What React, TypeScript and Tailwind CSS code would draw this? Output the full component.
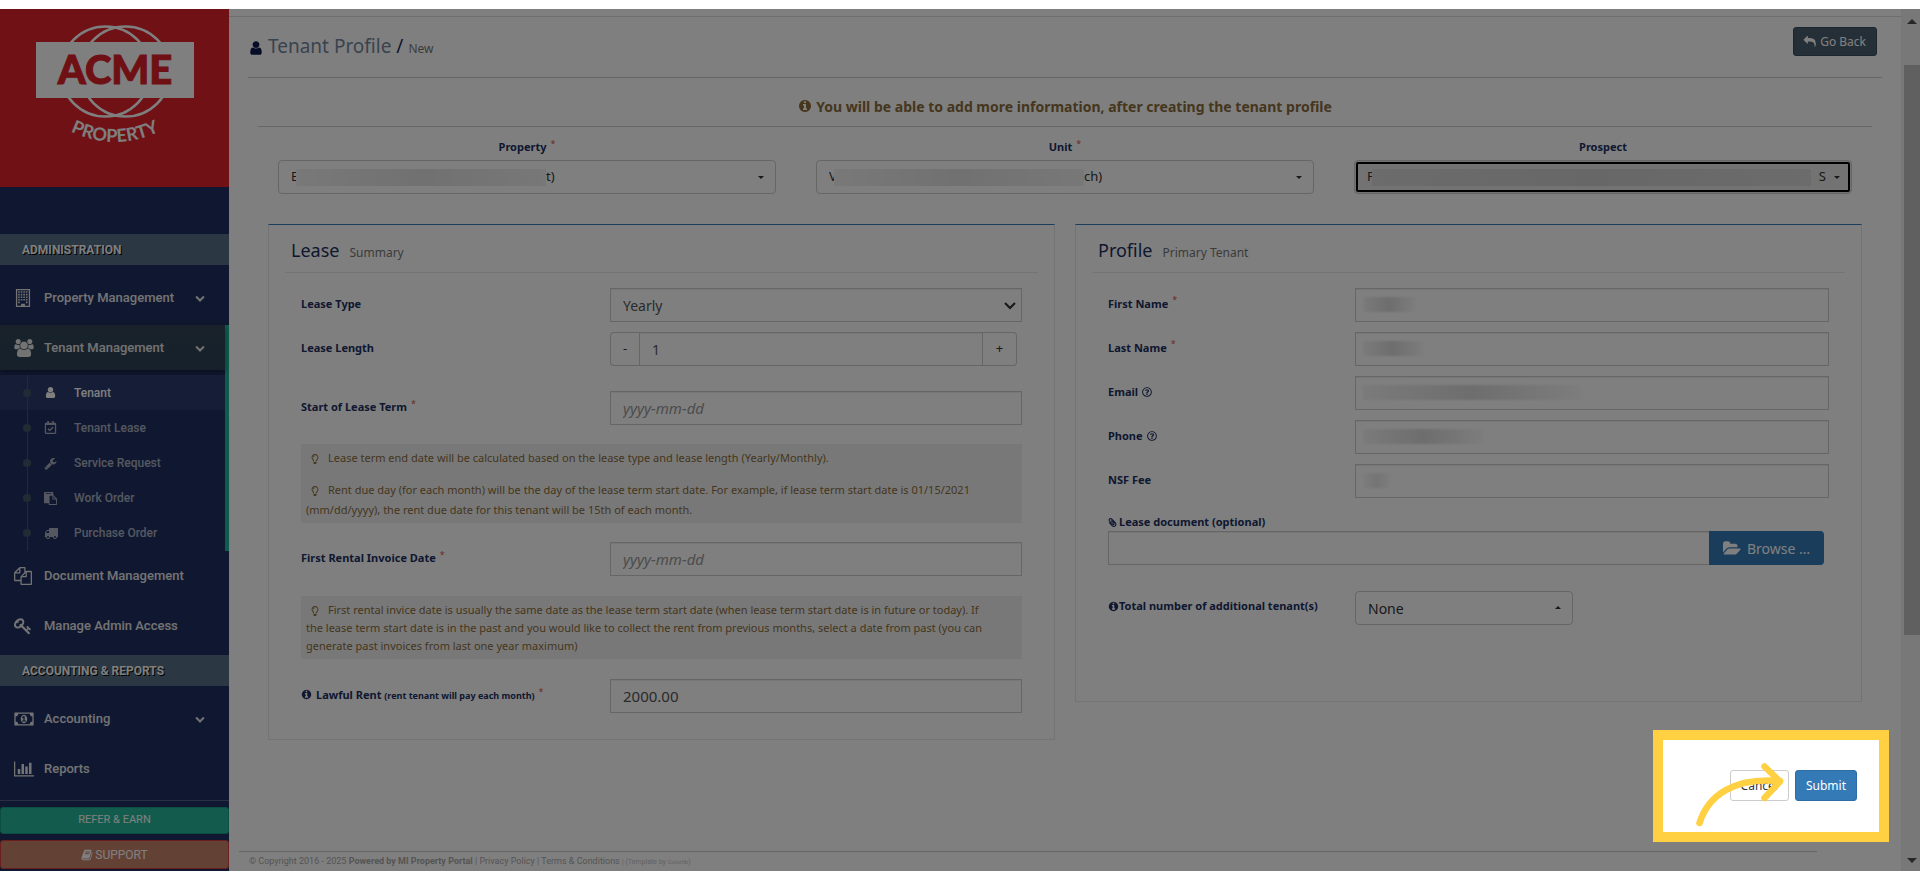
import type { ReactNode } from 'react';
import { FaPaperclip, FaRegCalendarCheck, FaRegLightbulb, FaRegQuestionCircle } from 'react-icons/fa';

const icons = {
  user: {
    w: 1792,
    d: 'M1536 1399q0 109-62.5 187t-150.500 78h-854q-88 0-150.500-78t-62.500-187q0-85 8.500-160.500t31.500-152 58.500-131 94-89 134.500-34.500q131 128 313 128t313-128q76 0 134.500 34.500t94 89 58.500 131 31.500 152 8.500 160.500zm-256-887q0 159-112.500 271.500t-271.500 112.500-271.500-112.500-112.500-271.500 112.500-271.500 271.500-112.500 271.500 112.500 112.500 271.500z',
  },
  building: {
    w: 1792,
    d: 'M192 0h1408v1792h-1408zM320 128v1536h384v-192h384v192h384v-1536zM416 224h160v160h-160zM672 224h160v160h-160zM928 224h160v160h-160zM1184 224h160v160h-160zM416 480h160v160h-160zM672 480h160v160h-160zM928 480h160v160h-160zM1184 480h160v160h-160zM416 736h160v160h-160zM672 736h160v160h-160zM928 736h160v160h-160zM1184 736h160v160h-160zM416 992h160v160h-160zM672 992h160v160h-160zM928 992h160v160h-160zM1184 992h160v160h-160zM416 1248h160v160h-160zM1184 1248h160v160h-160z',
  },
  info: {
    w: 1792,
    d: 'M1152 1376v-160q0-14-9-23t-23-9h-96v-512q0-14-9-23t-23-9h-320q-14 0-23 9t-9 23v160q0 14 9 23t23 9h96v320h-96q-14 0-23 9t-9 23v160q0 14 9 23t23 9h448q14 0 23-9t9-23zm-128-896v-160q0-14-9-23t-23-9h-192q-14 0-23 9t-9 23v160q0 14 9 23t23 9h192q14 0 23-9t9-23zm640 416q0 209-103 385.500t-279.500 279.500-385.500 103-385.500-103-279.500-279.500-103-385.500 103-385.500 279.500-279.500 385.500-103 385.500 103 279.500 279.500 103 385.500z',
  },
  chevron: {
    w: 1792,
    d: 'M1683 808l-742 741q-19 19-45 19t-45-19l-742-741q-19-19-19-45.500t19-45.500l166-165q19-19 45-19t45 19l531 531 531-531q19-19 45-19t45 19l166 165q19 19 19 45.500t-19 45.500z',
  },
  chart: {
    w: 2048,
    d: 'M640 896v512h-256v-512h256zm384-512v1024h-256v-1024h256zm1024 1152v128h-2048v-1536h128v1408h1920zm-640-896v768h-256v-768h256zm384-384v1152h-256v-1152h256z',
  },
  money: {
    w: 1920,
    d: 'M768 1152h384v-96h-128v-448h-114l-148 137 77 80q42-37 55-57h2v288h-128v96zm512-256q0 70-21 142t-59.500 134-101.500 101-138 39-138-39-101.500-101-59.500-134-21-142 21-142 59.500-134 101.500-101 138-39 138 39 101.500 101 59.500 134 21 142zm512 256v-512q-106 0-181-75t-75-181h-1152q0 106-75 181t-181 75v512q106 0 181 75t75 181h1152q0-106 75-181t181-75zm128-832v1152q0 26-19 45t-45 19h-1792q-26 0-45-19t-19-45v-1152q0-26 19-45t45-19h1792q26 0 45 19t19 45z',
  },
  group: {
    w: 1920,
    d: 'M593 896q-162 5-265 128h-134q-82 0-138-40.500t-56-118.500q0-353 124-353 6 0 43.500 21t97.500 42.500 119 21.500q67 0 133-23-5 37-5 66 0 139 81 256zm1071 637q0 120-73 189.500t-194 69.500h-874q-121 0-194-69.500t-73-189.500q0-53 3.500-103.500t14-109 26.500-108.500 43-97.500 62-81 85.500-53.500 111.500-20q10 0 43 21.500t73 48 107 48 135 21.500 135-21.500 107-48 73-48 43-21.500q61 0 111.500 20t85.500 53.500 62 81 43 97.500 26.500 108.500 14 109 3.500 103.500zm-1024-1277q0 106-75 181t-181 75-181-75-75-181 75-181 181-75 181 75 75 181zm704 384q0 159-112.500 271.500t-271.500 112.500-271.500-112.500-112.500-271.500 112.500-271.500 271.500-112.500 271.500 112.500 112.500 271.500zm576 225q0 78-56 118.500t-138 40.500h-134q-103-123-265-128 81-117 81-256 0-29-5-66 66 23 133 23 59 0 119-21.500t97.500-42.500 43.500-21q124 0 124 353zm-128-609q0 106-75 181t-181 75-181-75-75-181 75-181 181-75 181 75 75 181z',
  },
  wrench: {
    w: 1792,
    d: 'M448 1472q0-26-19-45t-45-19-45 19-19 45 19 45 45 19 45-19 19-45zm644-420l-682 682q-37 37-90 37-52 0-91-37l-106-108q-38-36-38-90 0-53 38-91l681-681q39 98 114.500 173.500t173.500 114.500zm634-435q0 39-23 106-47 134-164.500 217.500t-258.500 83.500q-185 0-316.500-131.500t-131.500-316.500 131.500-316.500 316.500-131.500q58 0 121.500 16.500t107.500 46.500q16 11 16 28t-16 28l-293 169v224l193 107q5-3 79-48.500t135.500-81 70.500-35.500q15 0 23.500 10t8.500 25z',
  },
  truck: {
    w: 1792,
    d: 'M640 1408q0-52-38-90t-90-38-90 38-38 90 38 90 90 38 90-38 38-90zm-384-512h384v-256h-158q-13 0-22 9l-195 195q-9 9-9 22v30zm1280 512q0-52-38-90t-90-38-90 38-38 90 38 90 90 38 90-38 38-90zm256-1088v1024q0 15-4 26.500t-13.500 18.500-16.500 11.500-23.500 6-22.500 2-25.500 0-22.500-.5q0 106-75 181t-181 75-181-75-75-181h-384q0 106-75 181t-181 75-181-75-75-181h-64q-3 0-22.500.5t-25.500 0-22.500-2-23.500-6-16.500-11.500-13.500-18.500-4-26.500q0-26 19-45t45-19v-320q0-8-.5-35t0-38 2.500-34.500 6.500-37 14-30.500 22.500-30l198-198q19-19 50.500-32t58.500-13h160v-192q0-26 19-45t45-19h1024q26 0 45 19t19 45z',
  },
  key: {
    w: 1792,
    d: 'M832 512q0-80-56-136t-136-56-136 56-56 136q0 42 19 83-41-19-83-19-80 0-136 56t-56 136 56 136 136 56 136-56 56-136q0-42-19-83 41 19 83 19 80 0 136-56t56-136zm851 704q0 17-49 66t-66 49q-9 0-28.500-16t-36.500-33-38.500-40-24.500-26l-96 96 220 220q28 28 28 68 0 42-39 81t-81 39q-40 0-68-28l-671-671q-176 131-365 131-163 0-265.500-102.500t-102.500-265.500q0-160 95-313t248-248 313-95q163 0 265.500 102.500t102.500 265.500q0 189-131 365l355 355 96-96q-3-3-26-24.500t-40-38.500-33-36.500-16-28.500q0-17 49-66t66-49q13 0 23 10 6 6 46 44.500t82 79.500 86.500 86 73 78 28.500 41z',
  },
  files: {
    w: 1792,
    d: 'M1696 384q40 0 68 28t28 68v1216q0 40-28 68t-68 28h-960q-40 0-68-28t-28-68v-288h-544q-40 0-68-28t-28-68v-672q0-40 20-88t48-76l408-408q28-28 76-48t88-20h416q40 0 68 28t28 68v328q68-40 128-40h416zm-544 213l-299 299h299v-299zm-640-384l-299 299h299v-299zm196 647l316-316v-416h-384v416q0 40-28 68t-68 28h-416v640h512v-256q0-40 20-88t48-76zm956 804v-1152h-384v416q0 40-28 68t-68 28h-416v640h896z',
  },
  paste: {
    w: 1792,
    d: 'M768 1664h896v-640h-416q-40 0-68-28t-28-68v-416h-384v1152zm256-1440v-64q0-13-9.500-22.500t-22.500-9.500h-704q-13 0-22.500 9.500t-9.500 22.500v64q0 13 9.500 22.500t22.500 9.500h704q13 0 22.500-9.500t9.500-22.500zm256 672h299l-299-299v299zm512 128v672q0 40-28 68t-68 28h-960q-40 0-68-28t-28-68v-160h-544q-40 0-68-28t-28-68v-1344q0-40 28-68t68-28h1088q40 0 68 28t28 68v328q21 13 36 28l408 408q28 28 48 76t20 88z',
  },
  reply: {
    w: 1792,
    d: 'M1792 1120q0 166-127 451-3 7-10.500 24t-13.500 30-13 22q-12 17-28 17-15 0-23.500-10t-8.500-25q0-9 2.500-26.500t2.500-23.500q5-68 5-123 0-112-19.500-200.500t-54-153.500-89-112-117-78-147.500-50.500-168.500-28.500-185-8h-224v256q0 26-19 45t-45 19-45-19l-512-512q-19-19-19-45t19-45l512-512q19-19 45-19t45 19 19 45v256h224q713 0 875 403 53 134 53 333z',
  },
  folder: {
    w: 1920,
    d: 'M1879 952q0 31-31 66l-336 396q-43 51-120.500 86.500t-143.500 35.500h-1088q-34 0-60.500-13t-26.500-43q0-31 31-66l336-396q43-51 120.500-86.500t143.500-35.500h1088q34 0 60.500 13t26.500 43zm-343-344v160h-832q-94 0-197 47.500t-164 119.500l-337 396-5 6q0-4-.5-12.500t-.5-12.500v-960q0-92 66-158t158-66h320q92 0 158 66t66 158v32h544q92 0 158 66t66 158z',
  },
  book: {
    w: 1792,
    d: 'M1703 478q40 57 18 129l-275 906q-19 64-76.500 107.500t-122.500 43.500h-923q-77 0-148.500-53.500t-99.500-131.500q-24-67-2-127 0-4 3-27t4-37q1-8-3-21.500t-3-19.500q2-11 8-21t16.500-23.500 16.500-23.500q23-38 45-91.500t30-91.500q3-10 .5-30t-.5-28q3-11 17-28t17-23q21-36 42-92t25-90q1-9-2.500-32t.5-28q4-13 22-30.500t22-22.500q19-26 42.500-84.500t27.500-96.500q1-8-3-25.500t-2-26.500q2-8 9-18t18-23 17-21q8-12 16.500-30.500t15-35 16-36 19.500-32 26.500-23.500 36-11.500 47.500 5.500l-1 3q38-9 51-9h761q74 0 114 56t18 130l-274 906q-36 119-71.500 153.500t-128.500 34.500h-869q-27 0-38 15-11 16-1 43 24 70 144 70h923q29 0 56-15.500t35-41.500l300-987q7-22 5-57 38 15 59 43zm-1064 2q-4 13 2 22.500t20 9.500h608q13 0 25.500-9.500t16.500-22.500l21-64q4-13-2-22.500t-20-9.500h-608q-13 0-25.500 9.500t-16.500 22.500zm-83 256q-4 13 2 22.500t20 9.500h608q13 0 25.500-9.500t16.500-22.500l21-64q4-13-2-22.500t-20-9.500h-608q-13 0-25.500 9.500t-16.500 22.500z',
  },
};

function Icon({ name, className }: { name: keyof typeof icons; className: string }) {
  const icon = icons[name];
  return (
    <svg
      viewBox={`0 0 ${icon.w} 1792`}
      className={`shrink-0 overflow-visible ${className}`}
      fill="currentColor"
      fillRule={name === 'building' ? 'evenodd' : 'nonzero'}
      aria-hidden="true"
    >
      <path d={icon.d} />
    </svg>
  );
}

function Caret({ up = false, className = '' }: { up?: boolean; className?: string }) {
  return (
    <svg viewBox="0 0 6 3" className={`pointer-events-none h-[3px] w-1.5 fill-[#333] ${up ? 'rotate-180' : ''} ${className}`} aria-hidden="true">
      <path d="M0 0h6L3 3z" />
    </svg>
  );
}

function Logo() {
  return (
    <svg viewBox="0 0 160 124" className="h-[124px] w-40" role="img" aria-label="ACME Property">
      <g fill="none" stroke="#fff" strokeWidth="2.600">
        <circle cx="70.500" cy="47.500" r="45" />
        <circle cx="90.500" cy="47.500" r="45" />
      </g>
      <rect x="1" y="18" width="158" height="56" fill="#fff" />
      <text
        x="80"
        y="60"
        textAnchor="middle"
        fill="#de2129"
        stroke="#de2129"
        strokeWidth="1"
        className="font-['Lato',sans-serif] text-[40px] font-black"
      >
        ACME
      </text>
      <path id="logo-arc" d="M22 100 Q80 136 138 100" fill="none" />
      <text fill="#fff" className="font-['Lato',sans-serif] text-[18px] font-bold">
        <textPath href="#logo-arc" startOffset="50%" textAnchor="middle">
          PROPERTY
        </textPath>
      </text>
    </svg>
  );
}

function MenuHeading({ children }: { children: ReactNode }) {
  return (
    <h3 className="flex h-[31px] items-center bg-[#577086] px-[22px] text-[12px] font-bold text-white uppercase [text-shadow:1px_1px_#000]">
      {children}
    </h3>
  );
}

function MenuItem({ icon, label, expandable = false, active = false }: { icon: ReactNode; label: string; expandable?: boolean; active?: boolean }) {
  return (
    <a
      href="#"
      className={`flex items-center pl-[14px] text-[13px] font-medium text-[#e7e7e7] ${
        active ? 'h-[45px] bg-linear-to-b from-[#334556] to-[#2c4257] pr-5 shadow-[0_2px_6px_rgba(0,0,0,0.4)]' : 'h-[50px] pr-6'
      }`}
    >
      <span className="flex w-[30px] shrink-0">{icon}</span>
      <span className="flex-1">{label}</span>
      {expandable && <Icon name="chevron" className="size-[10px]" />}
    </a>
  );
}

const tenantLinks = [
  { label: 'Tenant', icon: <Icon name="user" className="size-[13px]" /> },
  { label: 'Tenant Lease', icon: <FaRegCalendarCheck className="size-[13px]" /> },
  { label: 'Service Request', icon: <Icon name="wrench" className="size-[13px]" /> },
  { label: 'Work Order', icon: <Icon name="paste" className="size-[13px]" /> },
  { label: 'Purchase Order', icon: <Icon name="truck" className="size-[14px]" /> },
];

function Sidebar() {
  return (
    <aside className="flex w-[229px] shrink-0 flex-col bg-[#203062] font-['Roboto',sans-serif]">
      <div className="flex h-[178px] justify-center bg-[#de222b] pt-[15px]">
        <Logo />
      </div>
      <nav className="pt-[47px]">
        <MenuHeading>Administration</MenuHeading>
        <div className="pt-2 pb-0.5">
          <MenuItem icon={<Icon name="building" className="size-[18px]" />} label="Property Management" expandable />
        </div>
        <div className="border-r-4 border-[#1abb9c]">
          <MenuItem icon={<Icon name="group" className="h-[18px] w-5" />} label="Tenant Management" expandable active />
          <ul className="relative mt-[5px] flex h-44 flex-col">
            {tenantLinks.map((link, i) => (
              <li
                key={link.label}
                className={`relative flex flex-1 items-center before:absolute before:inset-y-0 before:left-[27px] before:w-px before:bg-[#425668] ${
                  i === 0 ? 'bg-[#2b3b6e]' : ''
                }`}
              >
                <span className="absolute left-[23px] size-2 rounded-full bg-[#425668]" />
                <a href="#" className={`flex items-center pl-11 text-[12px] font-medium ${i === 0 ? 'text-white' : 'text-[#aab0c0]'}`}>
                  <span className="flex w-[30px]">{link.icon}</span>
                  {link.label}
                </a>
              </li>
            ))}
          </ul>
        </div>
        <div className="pb-1">
          <MenuItem icon={<Icon name="files" className="size-[18px]" />} label="Document Management" />
          <MenuItem icon={<Icon name="key" className="size-[18px]" />} label="Manage Admin Access" />
        </div>
        <MenuHeading>Accounting &amp; Reports</MenuHeading>
        <div className="pt-2 pb-1.5">
          <MenuItem icon={<Icon name="money" className="h-[18px] w-5" />} label="Accounting" expandable />
          <MenuItem icon={<Icon name="chart" className="h-[18px] w-5" />} label="Reports" />
        </div>
      </nav>
      <div className="flex flex-col gap-1.5 border-t border-[#53618c] pt-1.5">
        <a href="#" className="flex h-[27px] items-center justify-center rounded-[3px] border border-[#169f85] bg-[#26b99a] text-[11px] text-white">
          REFER &amp; EARN
        </a>
        <a href="#" className="flex h-[29px] items-center justify-center gap-0.5 rounded-[3px] border border-[#d43f3a] bg-[#c9836b] text-[12px] text-white">
          <Icon name="book" className="size-3" />
          SUPPORT
        </a>
      </div>
    </aside>
  );
}

function Star() {
  return <sup className="ml-1 text-[9px] font-normal text-[#d9534f]">*</sup>;
}

const control =
  'block h-[34px] w-full min-w-0 border border-[#ccc] bg-white px-3 text-[#555] shadow-[inset_0_1px_1px_rgba(0,0,0,0.075)] outline-none placeholder:italic placeholder:text-[#999]';

const labelText = 'text-[11px] font-bold text-[#203062]';

function Picker({
  id,
  label,
  required = false,
  first,
  last,
  focused = false,
}: {
  id: string;
  label: string;
  required?: boolean;
  first: string;
  last: string;
  focused?: boolean;
}) {
  return (
    <div className="px-5">
      <label htmlFor={id} className={`mb-[3px] block h-5 text-center leading-5 ${labelText}`}>
        {label}
        {required && <Star />}
      </label>
      <div className="relative">
        <select
          id={id}
          className={`block h-[34px] w-full appearance-none rounded border border-[#ccc] px-3 text-[13px] text-[#333] ${
            focused ? 'bg-[#e6e6e6] outline-2 -outline-offset-4 outline-black' : 'bg-white'
          }`}
        >
          <option>{first}</option>
        </select>
        <span className="pointer-events-none absolute inset-y-0 right-3 left-[18px] flex items-center text-[13px] text-[#333]">
          <span
            className={`h-[17px] ${
              focused
                ? 'mr-2 flex-1 bg-linear-to-r from-[#d8d8d8] via-[#cfcfcf] to-[#d8d8d8]'
                : 'w-[250px] bg-linear-to-r from-[#f2f2f2] via-[#e2e2e2] to-[#f0f0f0]'
            }`}
          />
          {last}
          <Caret className={focused ? 'ml-2' : 'ml-auto'} />
        </span>
      </div>
    </div>
  );
}

function Panel({ title, subtitle, className, children }: { title: string; subtitle: string; className: string; children: ReactNode }) {
  return (
    <section className={`mx-2.5 border border-t-[#337ab7] border-x-[#e6e9ed] border-b-[#e6e9ed] px-4 pt-1 ${className}`}>
      <h2 className="flex h-11 items-center gap-2.5 border-b border-[#e6e9ed] px-1.5 text-[18px] text-[#203062]">
        {title}
        <small className="pt-1 text-[12px] text-[#777]">{subtitle}</small>
      </h2>
      <div className="px-4 pt-[15px]">{children}</div>
    </section>
  );
}

function Hidden({ className }: { className: string }) {
  return (
    <span
      className={`pointer-events-none absolute top-[9px] left-2 h-[15px] bg-linear-to-r from-[#f6f6f6] via-[#dcdcdc] to-[#fafafa] blur-[1px] ${className}`}
    />
  );
}

function ProfileRow({ id, label, type = 'text', hidden, children }: { id: string; label: string; type?: string; hidden: string; children?: ReactNode }) {
  return (
    <div className="grid grid-cols-[247fr_474fr]">
      <label htmlFor={id} className={`flex items-center self-start pt-[7px] leading-[18px] ${labelText}`}>
        {label}
        {children}
      </label>
      <div className="relative">
        <input id={id} type={type} className={`${control} text-[15px]`} />
        <Hidden className={hidden} />
      </div>
    </div>
  );
}

function Note({ children }: { children: ReactNode }) {
  return <div className="bg-[#f1f1f1] pr-[26px] pl-[5px] text-[11px] text-[#8a6d3b]">{children}</div>;
}

function Bulb() {
  return <FaRegLightbulb className="mr-2 ml-1 inline size-[10px]" aria-hidden="true" />;
}

const leaseRow = 'grid grid-cols-[3fr_4fr]';
const leaseLabel = `pt-1.5 leading-5 ${labelText}`;

function LeasePanel() {
  return (
    <Panel title="Lease" subtitle="Summary" className="pb-[26px]">
      <div className={leaseRow}>
        <label htmlFor="lease-type" className={leaseLabel}>
          Lease Type
        </label>
        <div className="relative">
          <select id="lease-type" className={`${control} appearance-none text-[14px]`}>
            <option>Yearly</option>
            <option>Monthly</option>
          </select>
          <svg viewBox="0 0 12 8" className="pointer-events-none absolute top-[14px] right-1.5 h-2 w-3" fill="none" stroke="#333" strokeWidth="2.200" aria-hidden="true">
            <path d="M1 1l5 5 5-5" />
          </svg>
        </div>
      </div>
      <div className={`mt-2.5 ${leaseRow}`}>
        <label htmlFor="lease-length" className={leaseLabel}>
          Lease Length
        </label>
        <div className="mr-[5px] flex text-[13px] text-[#333]">
          <button type="button" aria-label="Decrease lease length" className="w-[29px] shrink-0 rounded-l border border-r-0 border-[#ccc]">
            -
          </button>
          <input id="lease-length" defaultValue="1" className={`${control} text-[14px]`} />
          <button type="button" aria-label="Increase lease length" className="w-[34px] shrink-0 rounded-r border border-l-0 border-[#ccc]">
            +
          </button>
        </div>
      </div>
      <div className={`mt-[25px] ${leaseRow}`}>
        <label htmlFor="lease-start" className={leaseLabel}>
          Start of Lease Term
          <Star />
        </label>
        <input id="lease-start" placeholder="yyyy-mm-dd" className={`${control} text-[15px]`} />
      </div>
      <div className="mt-[19px]">
        <Note>
          <p className="pt-1 leading-5">
            <Bulb />
            Lease term end date will be calculated based on the lease type and lease length (Yearly/Monthly).
          </p>
          <p className="mt-3 pb-[3px] leading-5">
            <Bulb />
            Rent due day (for each month) will be the day of the lease term start date. For example, if lease term start date is 01/15/2021
            (mm/dd/yyyy), the rent due date for this tenant will be 15th of each month.
          </p>
        </Note>
      </div>
      <div className={`mt-[19px] ${leaseRow}`}>
        <label htmlFor="invoice-date" className={leaseLabel}>
          First Rental Invoice Date
          <Star />
        </label>
        <input id="invoice-date" placeholder="yyyy-mm-dd" className={`${control} text-[15px]`} />
      </div>
      <div className="mt-5">
        <Note>
          <p className="pt-[5px] pb-1 leading-[18px]">
            <Bulb />
            First rental invice date is usually the same date as the lease term start date (when lease term start date is in future or today).
            If the lease term start date is in the past and you would like to collect the rent from previous months, select a date from past
            (you can generate past invoices from last one year maximum)
          </p>
        </Note>
      </div>
      <div className={`mt-5 ${leaseRow}`}>
        <label htmlFor="rent" className={`${leaseLabel} whitespace-nowrap`}>
          <Icon name="info" className="mr-1 inline size-[11px] align-[-1px]" />
          Lawful Rent <small className="text-[9px]">(rent tenant will pay each month)</small>
          <Star />
        </label>
        <input id="rent" defaultValue="2000.00" className={`${control} text-[15px]`} />
      </div>
    </Panel>
  );
}

function ProfilePanel() {
  return (
    <Panel title="Profile" subtitle="Primary Tenant" className="pb-[76px]">
      <div className="flex flex-col gap-2.5">
        <ProfileRow id="first-name" label="First Name" hidden="w-[52px]">
          <Star />
        </ProfileRow>
        <ProfileRow id="last-name" label="Last Name" hidden="w-[60px]">
          <Star />
        </ProfileRow>
        <ProfileRow id="email" label="Email" type="email" hidden="w-[218px]">
          <FaRegQuestionCircle className="ml-1 size-[10px]" />
        </ProfileRow>
        <ProfileRow id="phone" label="Phone" type="tel" hidden="w-[120px]">
          <FaRegQuestionCircle className="ml-1 size-[10px]" />
        </ProfileRow>
        <ProfileRow id="nsf-fee" label="NSF Fee" hidden="w-[28px] opacity-60" />
      </div>
      <label htmlFor="document" className={`mt-4 flex h-[17px] items-center gap-0.5 ${labelText}`}>
        <FaPaperclip className="size-[9px] -scale-x-100" aria-hidden="true" />
        Lease document (optional)
      </label>
      <div className="mr-[5px] flex">
        <input id="document" readOnly className={`${control} flex-1 border-r-0 text-[15px]`} />
        <button type="button" className="flex h-[34px] shrink-0 items-center gap-1.5 rounded-r bg-[#337ab7] px-[14px] text-[14px] text-white">
          <Icon name="folder" className="h-[17px] w-[18px]" />
          Browse …
        </button>
      </div>
      <div className="mt-[26px] grid grid-cols-[247fr_474fr]">
        <label htmlFor="additional" className={`flex h-[30px] items-center whitespace-nowrap ${labelText}`}>
          <Icon name="info" className="size-[11px]" />
          Total number of additional tenant(s)
        </label>
        <div className="relative w-[46%]">
          <select id="additional" className="block h-[34px] w-full appearance-none rounded border border-[#ccc] bg-white px-3 text-[14px] text-[#333]">
            <option>None</option>
          </select>
          <Caret up className="absolute top-[15px] right-3" />
        </div>
      </div>
    </Panel>
  );
}

function Actions() {
  return (
    <div className="mt-[30px] mr-[15px] flex justify-end">
      <div className="relative flex gap-1.5">
        <button type="button" className="h-[31px] rounded-[3px] border border-[#ccc] bg-white px-2.5 text-[12px] text-[#333]">
          Cancel
        </button>
        <button type="submit" className="h-[31px] rounded-[3px] border border-[#2e6da4] bg-[#337ab7] px-2.5 text-[12px] text-white">
          Submit
        </button>
        <div className="pointer-events-none absolute -top-10 -right-8 -bottom-[41px] z-10 w-[236px] border-10 border-[#ffd042] shadow-[0_0_0_3000px_rgba(0,0,0,0.5)]">
          <svg viewBox="10 10 216 92" className="h-[92px] w-[216px]" fill="none" stroke="#ffd042" strokeWidth="6.500" strokeLinecap="round" strokeLinejoin="round" aria-hidden="true">
            <path d="M46.500 93C55 66 80 47 127 51" />
            <path d="M111.500 36.500L127 51.500L111.500 68" />
          </svg>
        </div>
      </div>
    </div>
  );
}

function Scrollbar() {
  return (
    <div className="flex w-[19px] shrink-0 flex-col items-center bg-[#f1f1f1] pt-2.5 pb-2 pl-[3px]" aria-hidden="true">
      <svg viewBox="0 0 10 5" className="h-[5px] w-2.5 fill-[#505050]">
        <path d="M0 5h10L5 0z" />
      </svg>
      <div className="flex w-full flex-1 flex-col">
        <div className="grow-[41]" />
        <div className="grow-[570] bg-[#c1c1c1]" />
        <div className="grow-[223]" />
      </div>
      <svg viewBox="0 0 10 5" className="h-[5px] w-2.5 fill-[#505050]">
        <path d="M0 0h10L5 5z" />
      </svg>
    </div>
  );
}

export default function App() {
  return (
    <div className="flex min-h-screen flex-col bg-white pt-[9px] pb-[7px] font-['Noto_Sans',sans-serif]">
      <div className="relative flex flex-1 overflow-hidden">
        <Sidebar />
        <main className="flex min-w-0 flex-1 flex-col">
          <div className="h-2 border-b border-[#d9dee4]" />
          <header className="mx-[19px] flex h-[61px] items-start justify-between border-b border-[#ccc] pt-2.5">
            <h1 className="flex items-center pt-[5px] text-[19px] leading-7 text-[#73879c]">
              <Icon name="user" className="mr-1 size-4 text-[#0c1a4f]" />
              <span>
                Tenant Profile <span className="text-[#203062]">/</span> <small className="text-[12px] text-[#777]">New</small>
              </span>
            </h1>
            <button
              type="button"
              className="mr-[5px] flex h-[29px] items-center gap-1 rounded-[3px] border border-[#394d5f] bg-[#4b5f71] px-2.5 text-[12px] text-white"
            >
              <Icon name="reply" className="size-3" />
              Go Back
            </button>
          </header>
          <form className="mx-[29px]">
            <p className="flex h-[49px] items-center justify-center gap-1 border-b border-[#ccc] pt-2 text-[14px] font-bold text-[#8a6d3b]">
              <Icon name="info" className="size-[14px]" />
              You will be able to add more information, after creating the tenant profile
            </p>
            <div className="grid grid-cols-3 pt-2.5">
              <Picker id="property" label="Property" required first="E" last="t)" />
              <Picker id="unit" label="Unit" required first="V" last="ch)" />
              <Picker id="prospect" label="Prospect" first="F" last="S" focused />
            </div>
            <div className="mt-[30px] grid grid-cols-2 items-start">
              <LeasePanel />
              <ProfilePanel />
            </div>
            <Actions />
          </form>
          <footer className="mt-auto mr-[84px] ml-2.5 h-5 border-t border-[#ccc] px-2.5 pt-0.5 font-['Roboto',sans-serif] text-[9px] leading-[14px] text-[#aaa]">
            © Copyright 2016 - 2025 <b>Powered by MI Property Portal</b> | <a href="#">Privacy Policy</a> | <a href="#">Terms &amp; Conditions</a>{' '}
            <small className="text-[7px] text-[#c4c4c4]">
              | (Template by <a href="#" className="text-[6px]">Colorlib</a>)
            </small>
          </footer>
        </main>
        <Scrollbar />
      </div>
    </div>
  );
}
